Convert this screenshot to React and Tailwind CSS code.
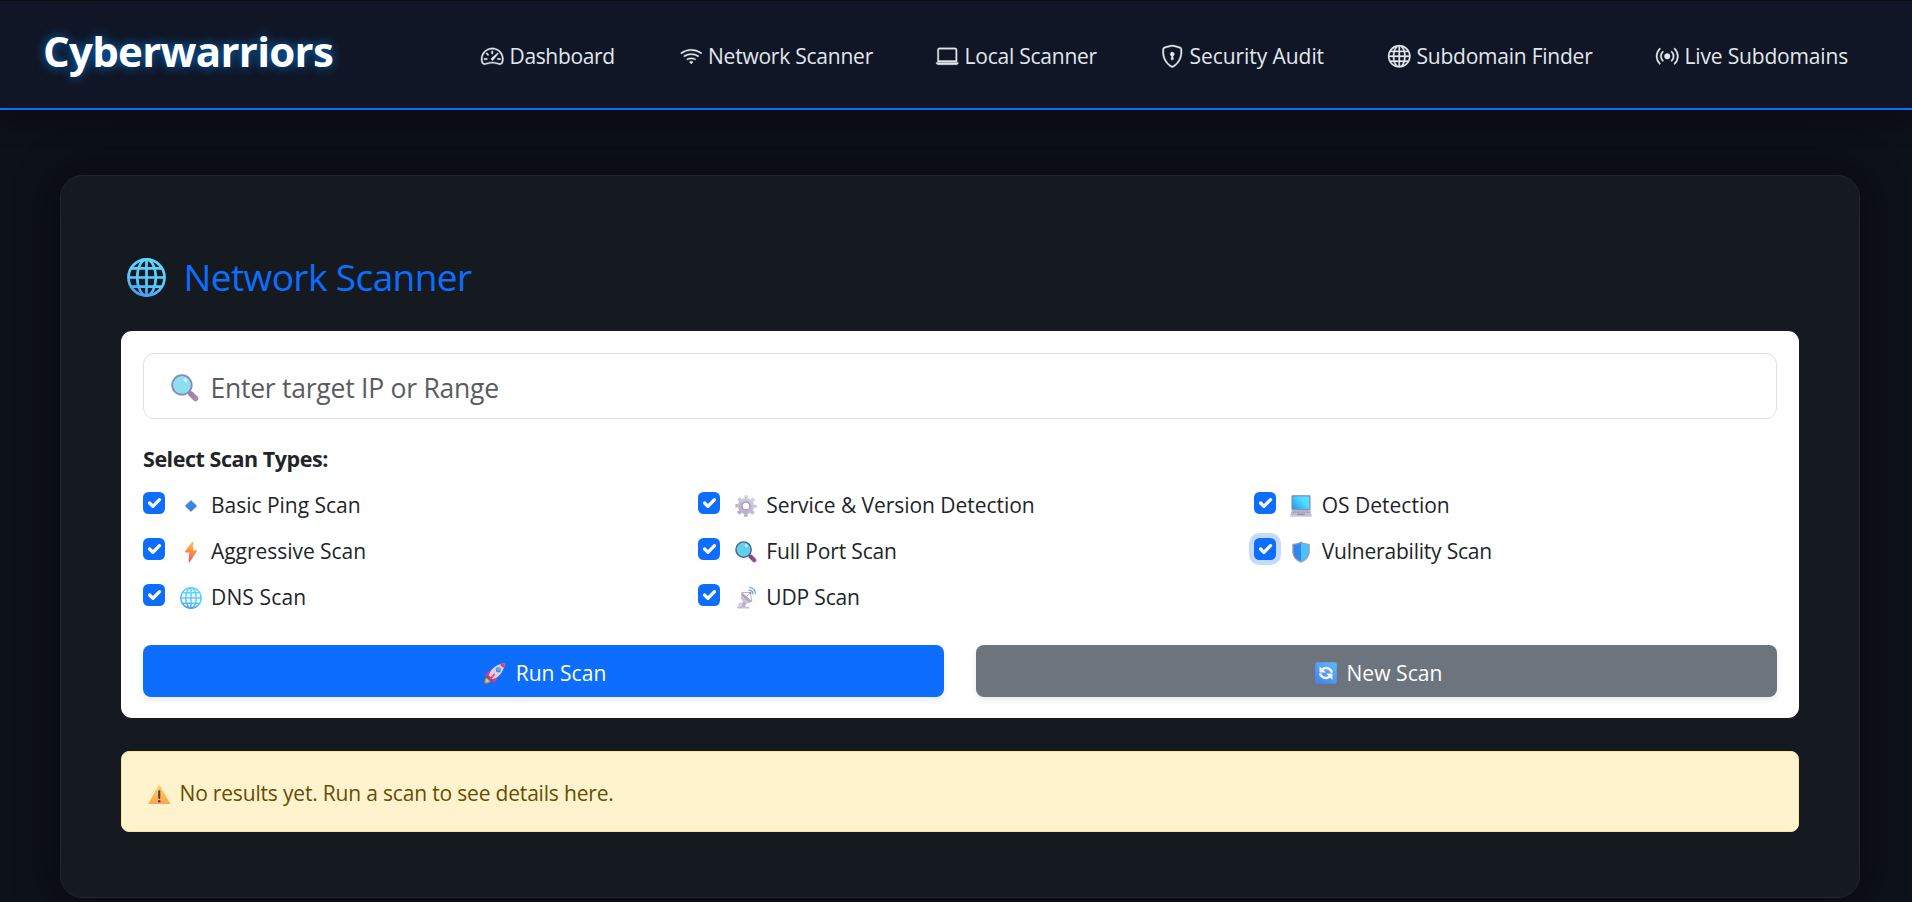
import { BsSpeedometer2, BsWifi, BsLaptop, BsShieldLock, BsGlobe, BsBroadcast } from "react-icons/bs";

function Globe({ className, id }) {
  return (
    <svg viewBox="0 0 32 32" className={className} fill="none">
      <defs>
        <linearGradient id={id} x1="16" y1="0" x2="6" y2="32" gradientUnits="userSpaceOnUse">
          <stop offset="0" stopColor="#5ad8ff" />
          <stop offset="0.6" stopColor="#55c8ff" />
          <stop offset="1" stopColor="#4a8fee" />
        </linearGradient>
      </defs>
      <g stroke={`url(#${id})`} strokeWidth="2.2">
        <circle cx="16" cy="16" r="14.8" />
        <ellipse cx="16" cy="16" rx="7.6" ry="14.8" />
        <path d="M16 1v30M1 16.01h30M3.4 8.51h25.2M3.4 23.51h25.2" />
      </g>
    </svg>
  );
}

function Magnifier({ className, id }) {
  return (
    <svg viewBox="0 0 32 32" className={className}>
      <defs>
        <linearGradient id={id} x1="20" y1="19" x2="31" y2="31" gradientUnits="userSpaceOnUse">
          <stop offset="0" stopColor="#6b4673" />
          <stop offset="1" stopColor="#9c5a9f" />
        </linearGradient>
      </defs>
      <path d="M20 20l2.5 2.5" stroke="#5b6078" strokeWidth="3.4" />
      <path d="M23 23l5 5" stroke={`url(#${id})`} strokeWidth="6.4" strokeLinecap="round" />
      <circle cx="12.5" cy="12.5" r="11.2" fill="#5fd0ea" stroke="#4d5f96" strokeWidth="2" />
      <ellipse cx="16.6" cy="7" rx="2" ry="2.6" fill="#b9eefb" transform="rotate(-35 16.6 7)" />
    </svg>
  );
}

function Diamond({ className }) {
  return (
    <svg viewBox="0 0 32 32" className={className}>
      <path d="M16 8.6L23.6 16 16 23.4 8.4 16z" fill="#3f83dc" stroke="#3f83dc" strokeWidth="1.6" strokeLinejoin="round" />
    </svg>
  );
}

function Bolt({ className }) {
  return (
    <svg viewBox="0 0 32 32" className={className}>
      <defs>
        <linearGradient id="bolt" x1="18" y1="1" x2="14" y2="31" gradientUnits="userSpaceOnUse">
          <stop offset="0" stopColor="#ffc24a" />
          <stop offset="0.5" stopColor="#ff8a45" />
          <stop offset="1" stopColor="#f7476c" />
        </linearGradient>
      </defs>
      <path d="M17.8 1L7.2 15.4c-.4.7 0 1.4.7 1.4h5.6L12.6 30.4c0 .9.9 1.1 1.4.4L24.7 14.6c.4-.7.1-1.3-.7-1.3h-5l.4-11.6c0-1-1-1.4-1.6-.7z" fill="url(#bolt)" />
    </svg>
  );
}

function Gear({ className }) {
  return (
    <svg viewBox="0 0 32 32" className={className}>
      <defs>
        <linearGradient id="gear" x1="24" y1="2" x2="8" y2="30" gradientUnits="userSpaceOnUse">
          <stop offset="0" stopColor="#d9d2e6" />
          <stop offset="1" stopColor="#b5a7c4" />
        </linearGradient>
      </defs>
      <g fill="none" stroke="url(#gear)">
        <circle cx="16" cy="16" r="8.4" strokeWidth="6.6" />
        <circle cx="16" cy="16" r="12.6" strokeWidth="6" strokeDasharray="4.9 5" strokeDashoffset="2.45" />
      </g>
      <circle cx="16" cy="16" r="5.9" fill="none" stroke="#9d8fae" strokeWidth="1.6" />
    </svg>
  );
}

function Laptop({ className }) {
  return (
    <svg viewBox="0 0 32 32" className={className}>
      <defs>
        <linearGradient id="screen" x1="4" y1="20" x2="24" y2="2" gradientUnits="userSpaceOnUse">
          <stop offset="0" stopColor="#1f9bee" />
          <stop offset="0.7" stopColor="#4fdcff" />
          <stop offset="1" stopColor="#55e2ff" />
        </linearGradient>
      </defs>
      <rect x="2.2" y="0.4" width="27.6" height="21.6" rx="1.2" fill="#8280aa" />
      <rect x="3.8" y="2" width="24.4" height="18.2" fill="url(#screen)" />
      <path d="M2.4 21.5h27.2L31.6 30H.4z" fill="#c3bdd2" />
      <path d="M4.4 23.4h23.2M3.8 25.6h24.4" stroke="#9990ac" strokeWidth="1.2" strokeDasharray="2 .8" />
      <path d="M11 27.4h10l.6 2.4H10.4z" fill="#958ca8" />
      <rect x="0" y="29.4" width="32" height="2.2" rx="1" fill="#c9c4d6" />
    </svg>
  );
}

function Shield({ className }) {
  return (
    <svg viewBox="0 0 32 32" className={className}>
      <path d="M16 .6c3.600 2 7.600 3 11.600 3.400.8.1 1.200.6 1.200 1.300v9.400c0 8-4.200 13.800-12.800 16.900C7.400 28.500 3.200 22.700 3.200 14.700V5.300c0-.7.4-1.200 1.200-1.300C8.400 3.600 12.400 2.600 16 .6z" fill="#a39bb3" />
      <path d="M16 2.600c3.500 1.700 7.200 2.700 10.900 3.100v9c0 7-3.500 12-10.900 14.900z" fill="#4cc0fb" />
      <path d="M16 2.600C12.500 4.300 8.800 5.300 5.100 5.700v9c0 7 3.500 12 10.900 14.900z" fill="#3187ea" />
    </svg>
  );
}

function Satellite({ className }) {
  return (
    <svg viewBox="0 0 32 32" className={className}>
      <path d="M5 23.500c2-1.500 6-1.500 8 0l1.500 6H4z" fill="#d8cfe2" />
      <path d="M12 20l5 3.500-3 6H9z" fill="#bcafc6" />
      <rect x="3" y="28.600" width="18" height="2.800" rx="1" fill="#c8bcd3" />
      <path d="M9.800 7.500C6.800 14 9 20 13.500 22.500c3.800 2.100 8.600 1.500 11.200-1.300z" fill="#cfc4d1" />
      <path d="M9.800 7.500l14.900 13.700c-2 1.300-6.700-.4-10.400-4.100C10.800 13.500 9 9.500 9.800 7.500z" fill="#b3a4bb" />
      <path d="M10 7.800l12.400.4-7.400 7.600M22.400 8.200l2 12.600" fill="none" stroke="#a99eb3" strokeWidth="1.200" />
      <circle cx="22.400" cy="8.400" r="1.600" fill="#978aa4" />
      <path d="M20.500 4.800c3.200-.6 5.800 2 5.400 5.300M21 1c5-.4 9 3.600 8.400 8.800" fill="none" stroke="#4d8df0" strokeWidth="1.500" strokeLinecap="round" />
    </svg>
  );
}

function Rocket({ className }) {
  return (
    <svg viewBox="0 0 32 32" className={className}>
      <path d="M1 31c-.6-3.400.2-6.600 2.600-8.400l6 5.800C7.800 30.500 4.500 31.400 1 31z" fill="#f58a1f" />
      <path d="M2.600 29.400c0-2 .6-3.600 2-4.600l2.600 2.600c-1 1.300-2.600 2-4.600 2z" fill="#ffc83d" />
      <path d="M12.500 12.500c-4.500-.5-8.500 2-11 7.300l6.500.7zM19.500 19.500c.5 4.500-2 8.500-6.300 11l-1.700-6.500z" fill="#f0316b" />
      <path d="M7 19.500C9.500 11 16 3.800 30.600 1.400 28.200 16 21 22.500 12.500 25z" fill="#d9d0e3" />
      <path d="M23.500 3.400c2.200-.9 4.500-1.600 7.100-2-.4 2.600-1.100 4.900-2 7.100-2.400-.9-4.200-2.700-5.100-5.100z" fill="#ee3a5c" />
      <path d="M7 19.500l-1.600 3.200 3.900 3.900 3.200-1.600z" fill="#c9406f" />
      <path d="M15 16.200L6.800 25.200c2.800.8 7-2.400 9.300-7z" fill="#f5407a" />
      <circle cx="20.800" cy="11.200" r="3.700" fill="#4e7fd4" />
      <circle cx="21" cy="11" r="2.200" fill="#59b7f0" />
    </svg>
  );
}

function Refresh({ className }) {
  return (
    <svg viewBox="0 0 32 32" className={className}>
      <defs>
        <linearGradient id="tile" x1="26" y1="2" x2="8" y2="31" gradientUnits="userSpaceOnUse">
          <stop offset="0" stopColor="#5fb2fc" />
          <stop offset="1" stopColor="#4488ee" />
        </linearGradient>
      </defs>
      <rect x="0.300" y="0.300" width="31.400" height="31.400" rx="3" fill="url(#tile)" />
      <g fill="none" stroke="#f4f0fb" strokeWidth="3.600">
        <path d="M10.500 11.200c3.500-3.400 9-3.200 12.300.6 1 1.200 1.500 2.400 1.600 3.700" />
        <path d="M21.500 20.800c-3.500 3.400-9 3.200-12.300-.6-1-1.200-1.500-2.400-1.600-3.700" />
      </g>
      <path d="M6.600 6v9.200h9.200zM25.400 26v-9.200h-9.200z" fill="#f4f0fb" />
    </svg>
  );
}

function Warning({ className }) {
  return (
    <svg viewBox="0 0 32 28" className={className}>
      <defs>
        <linearGradient id="warn" x1="16" y1="1" x2="16" y2="28" gradientUnits="userSpaceOnUse">
          <stop offset="0" stopColor="#ffd35a" />
          <stop offset="1" stopColor="#ffa052" />
        </linearGradient>
      </defs>
      <path d="M14.800 1.200c.5-.9 1.900-.9 2.400 0l14.200 25c.4.800 0 1.600-1 1.600H1.600c-1 0-1.400-.8-1-1.600z" fill="url(#warn)" />
      <path d="M16 9.200v9.400" stroke="#474059" strokeWidth="3" strokeLinecap="round" />
      <circle cx="16" cy="23.400" r="1.800" fill="#474059" />
    </svg>
  );
}

const nav = [
  { icon: BsSpeedometer2, label: "Dashboard", width: "w-[198.5px]", tracking: "tracking-[-0.35px]" },
  { icon: BsWifi, label: "Network Scanner", width: "w-[256.5px]", tracking: "tracking-[-0.23px]" },
  { icon: BsLaptop, label: "Local Scanner", width: "w-[225px]", tracking: "tracking-[-0.23px]" },
  { icon: BsShieldLock, label: "Security Audit", width: "w-[227px]", tracking: "tracking-[-0.06px]" },
  { icon: BsGlobe, label: "Subdomain Finder", width: "w-[268px]", tracking: "tracking-[-0.23px]" },
  { icon: BsBroadcast, label: "Live Subdomains", width: "w-[194px]", tracking: "tracking-[-0.17px]" },
];

const scans = [
  { icon: Diamond, label: "Basic Ping Scan", tracking: "tracking-[-0.02px]" },
  { icon: Gear, label: "Service & Version Detection", tracking: "tracking-[-0.05px]" },
  { icon: Laptop, label: "OS Detection", tracking: "tracking-[0.01px]" },
  { icon: Bolt, label: "Aggressive Scan", tracking: "tracking-[-0.04px]" },
  { icon: Magnifier, label: "Full Port Scan", tracking: "tracking-[-0.16px]" },
  { icon: Shield, label: "Vulnerability Scan", tracking: "tracking-[-0.2px]", focused: true },
  { icon: Globe, label: "DNS Scan", tracking: "tracking-[0.15px]" },
  { icon: Satellite, label: "UDP Scan", tracking: "tracking-[-0.16px]" },
];

function ScanOption({ icon: Icon, label, tracking, focused, index }) {
  return (
    <label className="flex h-[46px] items-center">
      <span
        role="checkbox"
        aria-checked="true"
        className={`-mt-[5px] size-[22px] shrink-0 rounded-[5.5px] bg-[#0d6efd] ${focused ? "shadow-[0_0_0_5px_#c2dbfe]" : ""}`}
      >
        <svg viewBox="0 0 20 20" className="size-full" fill="none">
          <path d="m6 10 3 3 6-6" stroke="#fff" strokeWidth="3" strokeLinecap="round" strokeLinejoin="round" />
        </svg>
      </span>
      <Icon id={`scan-${index}`} className="ml-[14.5px] mt-px size-[22px] shrink-0" />
      <span className={`ml-[9.5px] text-[21px] leading-[30px] whitespace-nowrap text-[#212529] ${tracking}`}>{label}</span>
    </label>
  );
}

export default function App() {
  return (
    <div className="flex h-[902px] flex-col overflow-hidden bg-[#0d1118] font-['Open_Sans','Noto_Sans',sans-serif]">
      <header className="z-10 flex h-[110px] shrink-0 items-start border-t border-b-2 border-t-[#0b0b0c] border-b-[#0d6efd] bg-[#101625] shadow-[0_6px_28px_rgba(0,0,0,0.4)]">
        <div className="w-[481px] shrink-0 pt-[20px] pl-[43px] text-[42px] leading-[60px] font-bold tracking-[-0.71px] text-white [text-shadow:0_0_11px_rgba(0,140,255,0.75)]">
          Cyberwarriors
        </div>
        <nav className="flex pt-[40px]">
          {nav.map(({ icon: Icon, label, width, tracking }) => (
            <a key={label} className={`flex h-[30px] shrink-0 items-center gap-[6px] text-[#e1e7ee] ${width}`}>
              <Icon className="size-[22.5px] shrink-0 overflow-visible stroke-current stroke-[0.25]" />
              <span className={`text-[21px] leading-[30px] whitespace-nowrap ${tracking}`}>{label}</span>
            </a>
          ))}
        </nav>
      </header>

      <main className="mt-[65px] ml-[60px] flex h-[723px] w-[1800px] shrink-0 flex-col rounded-[22px] border border-[#212529] bg-[#151a21] px-[60px] pt-[74px] shadow-[0_0_42px_rgba(0,0,0,0.5)]">
        <h2 className="flex h-[54px] items-center pl-[6px] text-[#0d6efd]">
          <Globe id="heading-globe" className="h-[39px] w-[39px]" />
          <span className="ml-[17.5px] text-[37px] leading-[54px] tracking-[-0.58px]">Network Scanner</span>
        </h2>

        <section className="mt-[27px] flex h-[387px] flex-col rounded-[11px] bg-white px-[22px] pt-[22px]">
          <div className="flex h-[66px] items-center rounded-[11px] border border-[#dee2e6] pl-[27px]">
            <Magnifier id="target-lens" className="mt-[3px] size-[28px] opacity-70" />
            <span className="mt-[3px] ml-[11.5px] text-[26.5px] leading-[38px] tracking-[-0.24px] text-[#595c5f]">Enter target IP or Range</span>
          </div>

          <h3 className="mt-[25px] h-[38px] text-[21.5px] leading-[30px] font-bold tracking-[-0.46px] text-[#212529]">Select Scan Types:</h3>

          <div className="mr-[-32px] grid grid-cols-3">
            {scans.map((s, i) => (
              <ScanOption key={s.label} index={i} {...s} />
            ))}
          </div>

          <div className="mt-[25px] grid grid-cols-2 gap-[32px] text-[21px] leading-[30px] text-white">
            <button className="flex h-[52px] items-center justify-center gap-[10px] rounded-[8px] bg-[#0d6efd] pt-[3px] pl-[3px] shadow-[0_3px_6px_rgba(0,0,0,0.09)]">
              <Rocket className="size-[22px]" />
              <span className="tracking-[0.05px]">Run Scan</span>
            </button>
            <button className="flex h-[52px] items-center justify-center gap-[9px] rounded-[8px] bg-[#6c757d] pt-[3px] pl-[5px] shadow-[0_3px_6px_rgba(0,0,0,0.09)]">
              <Refresh className="size-[22px]" />
              <span className="tracking-[0.08px]">New Scan</span>
            </button>
          </div>
        </section>

        <div className="mt-[33px] flex h-[81px] items-center rounded-[8px] border border-[#ffe69c] bg-[#fff3cd] pt-[3px] pl-[26px]">
          <Warning className="mt-[3px] h-[19.5px] w-[22.5px]" />
          <span className="ml-[9px] text-[21px] leading-[30px] tracking-[-0.18px] text-[#664d03]">No results yet. Run a scan to see details here.</span>
        </div>
      </main>
    </div>
  );
}
